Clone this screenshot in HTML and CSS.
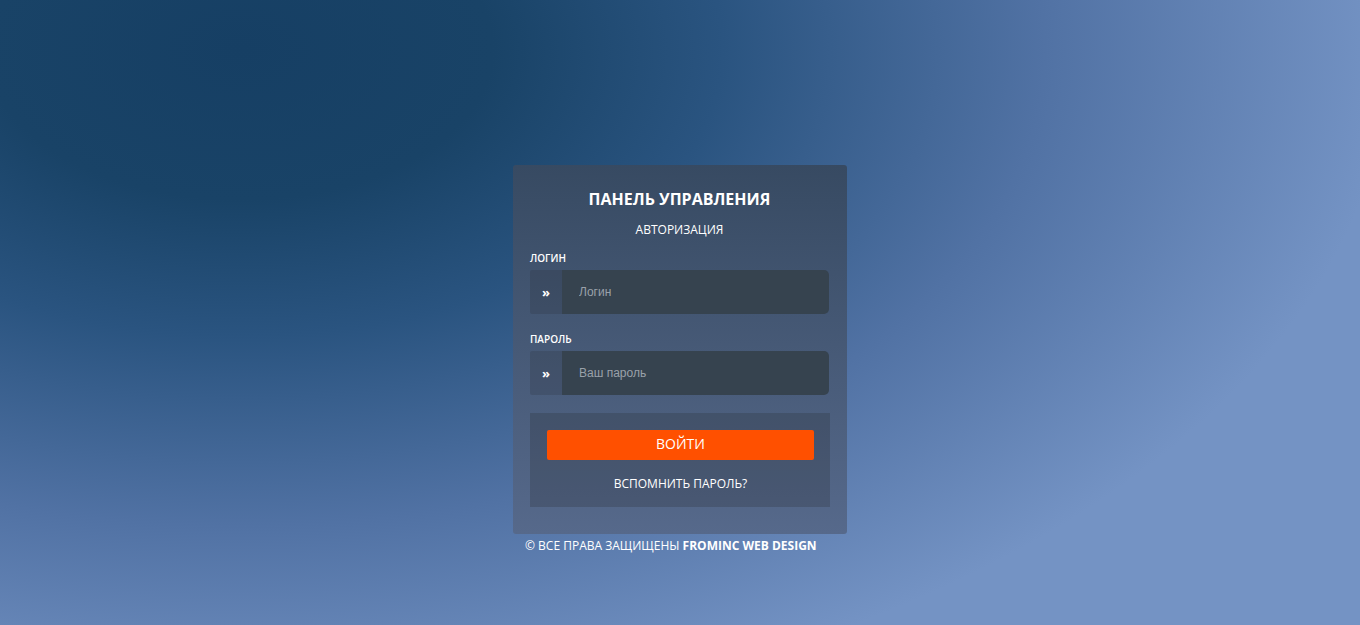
FILE: index.html
```html
<!DOCTYPE html>
<html lang="ru">
<head>
    <meta charset="UTF-8">
    <meta name="viewport" content="width=device-width, initial-scale=1.0">
    <title>Панель управления</title>
    <link rel="stylesheet" href="styles.css">
</head>
<body>

<div class="wrapper">
    <form class="login-box" onsubmit="return false;">
        <h1 class="login-title">ПАНЕЛЬ УПРАВЛЕНИЯ</h1>
        <div class="login-sub">АВТОРИЗАЦИЯ</div>

        <label class="field-label" for="login">ЛОГИН</label>
        <div class="input-group">
            <span class="input-addon">»</span>
            <input type="text" id="login" placeholder="Логин">
        </div>

        <label class="field-label field-gap" for="pass">ПАРОЛЬ</label>
        <div class="input-group">
            <span class="input-addon">»</span>
            <input type="password" id="pass" placeholder="Ваш пароль">
        </div>

        <div class="actions">
            <button type="submit" class="btn-login">ВОЙТИ</button>
            <a href="#" class="forgot">ВСПОМНИТЬ ПАРОЛЬ?</a>
        </div>
    </form>
    <div class="copyright">© ВСЕ ПРАВА ЗАЩИЩЕНЫ <b>FROMINC WEB DESIGN</b></div>
</div>

</body>
</html>
```
FILE: styles.css
```css
html, body {
    margin: 0;
    height: 100%;
}

body {
    font-family: "Open Sans", "Liberation Sans", sans-serif;
    color: #fff;
    background:
        radial-gradient(ellipse 1150px 680px at 240px 50px, #163f64 0%, #194367 22%, #2a5480 42%, #5172a4 70%, rgba(116,147,196,0) 100%),
        #7493c4;
}

.wrapper {
    width: 334px;
    margin: 0 auto;
    padding-top: 165px;
    display: flex;
    flex-direction: column;
}

.login-box {
    box-sizing: border-box;
    padding: 23px 18px 27px 17px;
    background: linear-gradient(to bottom, #374a62, #56698b);
    border-radius: 3px;
    display: flex;
    flex-direction: column;
}

.login-title {
    margin: 0;
    font-size: 16px;
    line-height: 22px;
    font-weight: 700;
    text-align: center;
}

.login-sub {
    margin-top: 11px;
    font-size: 12px;
    line-height: 17px;
    text-align: center;
}

.field-label {
    margin-top: 13px;
    font-size: 10px;
    line-height: 14px;
    font-weight: 600;
}

.field-gap {
    margin-top: 18px;
}

.input-group {
    display: flex;
    height: 44px;
    margin-top: 5px;
    border-radius: 2px 5px 5px 2px;
    overflow: hidden;
}

.input-addon {
    width: 32px;
    display: flex;
    align-items: center;
    justify-content: center;
    background: rgba(40, 46, 56, 0.22);
    font-weight: 700;
    font-size: 13px;
}

.input-group input {
    flex: 1;
    border: 0;
    outline: 0;
    padding: 0 17px;
    background: #36434f;
    color: #fff;
    font-family: "Liberation Sans", Arial, sans-serif;
    font-size: 12px;
}

.input-group input::placeholder {
    color: #9aa1aa;
}

.actions {
    margin-top: 18px;
    margin-right: -1px;
    padding: 17px 16px 15px 17px;
    background: rgba(30, 30, 30, 0.2);
    display: flex;
    flex-direction: column;
    align-items: stretch;
}

.btn-login {
    height: 30px;
    padding: 0 0 3px;
    border: 0;
    border-radius: 2px;
    background: #ff5000;
    color: #fff;
    font-family: "Open Sans", "Liberation Sans", sans-serif;
    font-size: 14px;
    cursor: pointer;
}

.forgot {
    margin-top: 15px;
    font-size: 12px;
    line-height: 17px;
    text-align: center;
    color: #fff;
    text-decoration: none;
}

.copyright {
    margin: 3px 0 0 12px;
    font-size: 12px;
    line-height: 17px;
}
```
